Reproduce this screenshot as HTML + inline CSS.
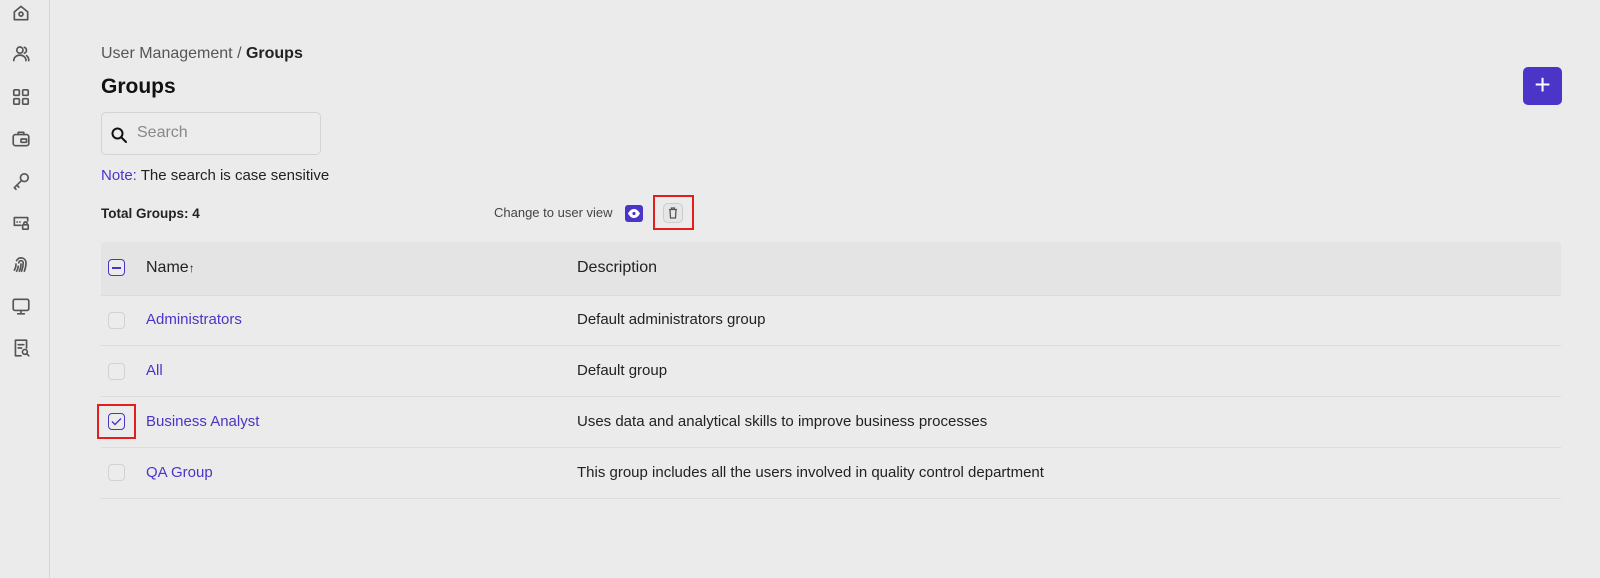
<!DOCTYPE html>
<html><head><meta charset="utf-8"><style>
*{margin:0;padding:0;box-sizing:border-box}
body{width:1600px;height:578px;background:#ebebeb;font-family:"Liberation Sans",sans-serif;position:relative;overflow:hidden;color:#222}
.a{position:absolute}
.side{left:0;top:0;width:50px;height:578px;border-right:1px solid #d4d4d4;background:#ebebeb}
.side svg{position:absolute;left:11px;width:20px;height:20px;fill:none;stroke:#555;stroke-width:1.5;stroke-linecap:round;stroke-linejoin:round}
.cb{width:17px;height:17px;border:1.5px solid #d2d2d2;border-radius:4px;background:#ececec}
.row{left:101px;width:1460px;height:51px;border-bottom:1px solid #dcdcdc}
.lk{color:#4a35c8;font-size:15px}
.ds{font-size:15px;color:#222}
</style></head><body>
<div class="a side">
<svg style="top:3px" viewBox="0 0 18 18"><path d="M3 8 L9 3 L15 8 V15 H3 Z"/><circle cx="9" cy="10" r="1.8"/></svg>
<svg style="top:44px" viewBox="0 0 18 18"><circle cx="8" cy="5.5" r="2.8"/><path d="M2.5 15c0-3 2.5-5 5.5-5s5.5 2 5.5 5"/><path d="M12 3a2.8 2.8 0 0 1 0 5.3M14 10.5c1.3.8 2 2.5 2 4.5"/></svg>
<svg style="top:87px" viewBox="0 0 18 18"><rect x="2.5" y="2.5" width="5" height="5" rx="1"/><rect x="10.5" y="2.5" width="5" height="5" rx="1"/><rect x="2.5" y="10.5" width="5" height="5" rx="1"/><rect x="10.5" y="10.5" width="5" height="5" rx="1"/></svg>
<svg style="top:129px" viewBox="0 0 18 18"><rect x="2" y="5" width="14" height="10" rx="2"/><path d="M6.5 5V3h5v2"/><rect x="9" y="9" width="5" height="3" rx="0.5"/></svg>
<svg style="top:171px" viewBox="0 0 18 18"><circle cx="12" cy="6" r="3.5"/><path d="M9.5 8.5 L3 15 L4.5 16.5 M5.5 13 L7 14.5"/></svg>
<svg style="top:212px" viewBox="0 0 18 18"><path d="M9 12H3V5h12v3"/><path d="M5.5 9h.1M8 9h.1"/><rect x="10.5" y="11.5" width="5" height="4" rx="0.5"/><path d="M11.5 11.5v-1a1.5 1.5 0 0 1 3 0v1"/></svg>
<svg style="top:254px" viewBox="0 0 18 18"><path d="M5 6a4.5 4.5 0 0 1 8.5 1.5c0 3-.5 5.5-1.5 8M4.5 9c0 2.5-.5 4-1.5 5.5M7 8a2 2 0 0 1 4 0c0 3-.5 5-1.5 7.5M9 9c0 2.5-.5 4.5-1.5 6.5M6.5 11c0 1.5-.5 3-1.5 4.5"/></svg>
<svg style="top:296px" viewBox="0 0 18 18"><rect x="2" y="3" width="14" height="10" rx="1.5"/><path d="M9 13v3M6 16h6"/></svg>
<svg style="top:338px" viewBox="0 0 18 18"><path d="M9 16H4V2h10v7"/><path d="M6.5 6h5M6.5 9h3"/><circle cx="12.5" cy="12.5" r="2.2"/><path d="M14 14l2 2"/></svg>
</div>

<div class="a" style="left:101px;top:45px;font-size:16px;color:#555">User Management / <b style="color:#222">Groups</b></div>
<div class="a" style="left:101px;top:75px;font-size:21px;font-weight:bold;color:#111">Groups</div>
<div class="a" style="left:1523px;top:67px;width:39px;height:38px;background:#4a35c8;border-radius:5px;color:#fff;font-size:28px;line-height:36px;text-align:center;font-weight:300">+</div>

<div class="a" style="left:101px;top:112px;width:220px;height:43px;border:1px solid #d4d4d4;border-radius:5px;background:#ececec"></div>
<svg class="a" style="left:110px;top:126px" width="18" height="18" viewBox="0 0 18 18" fill="none" stroke="#111" stroke-width="2" stroke-linecap="round"><circle cx="7.5" cy="7.5" r="5"/><path d="M11.5 11.5L16 16"/></svg>
<div class="a" style="left:137px;top:124px;font-size:16px;color:#888">Search</div>
<div class="a" style="left:101px;top:167px;font-size:15px;color:#222"><span style="color:#4a35c8">Note:</span> The search is case sensitive</div>

<div class="a" style="left:101px;top:206px;font-size:13.5px;font-weight:bold;color:#222">Total Groups: 4</div>
<div class="a" style="left:494px;top:205px;font-size:13px;color:#444">Change to user view</div>
<div class="a" style="left:625px;top:205px;width:18px;height:17px;background:#4a35c8;border-radius:3px"></div>
<svg class="a" style="left:627px;top:207px" width="14" height="13" viewBox="0 0 14 13"><path d="M1 6.5C3 3 5 2 7 2s4 1 6 4.5C11 10 9 11 7 11S3 10 1 6.5z" fill="#fff"/><circle cx="7" cy="6.5" r="1.6" fill="#4a35c8"/></svg>
<div class="a" style="left:663px;top:203px;width:20px;height:20px;border:1px solid #ccc;border-radius:5px;background:#e6e6e6"></div>
<svg class="a" style="left:668px;top:207px" width="10" height="12" viewBox="0 0 10 12" fill="none" stroke="#555" stroke-width="1.3"><path d="M1 2.5h8M3.5 2.5V1h3v1.5M2 2.5l.5 8.5h5l.5-8.5"/></svg>
<div class="a" style="left:653px;top:195px;width:41px;height:35px;border:2px solid #e31e1e"></div>

<div class="a" style="left:101px;top:242px;width:1460px;height:54px;background:#e4e4e4;border-radius:4px 4px 0 0;border-bottom:1px solid #dcdcdc"></div>
<div class="a cb" style="left:108px;top:259px;border-color:#4a35c8;background:#ececec"></div>
<div class="a" style="left:112px;top:267px;width:9px;height:1.5px;background:#4a35c8"></div>
<div class="a" style="left:146px;top:259px;font-size:16px;color:#222">Name<span style="font-size:12px">↑</span></div>
<div class="a" style="left:577px;top:259px;font-size:16px;color:#222">Description</div>

<div class="a row" style="top:295px"></div>
<div class="a cb" style="left:108px;top:312px"></div>
<div class="a lk" style="left:146px;top:311px">Administrators</div>
<div class="a ds" style="left:577px;top:311px">Default administrators group</div>

<div class="a row" style="top:346px"></div>
<div class="a cb" style="left:108px;top:363px"></div>
<div class="a lk" style="left:146px;top:362px">All</div>
<div class="a ds" style="left:577px;top:362px">Default group</div>

<div class="a row" style="top:397px"></div>
<div class="a cb" style="left:108px;top:413px;border-color:#4a35c8"></div>
<svg class="a" style="left:111px;top:417px" width="11" height="9" viewBox="0 0 11 9" fill="none" stroke="#4a35c8" stroke-width="1.4"><path d="M1 4.5L4 7.5L10 1.5"/></svg>
<div class="a" style="left:97px;top:404px;width:39px;height:35px;border:2px solid #e31e1e"></div>
<div class="a lk" style="left:146px;top:413px">Business Analyst</div>
<div class="a ds" style="left:577px;top:413px">Uses data and analytical skills to improve business processes</div>

<div class="a row" style="top:448px"></div>
<div class="a cb" style="left:108px;top:464px"></div>
<div class="a lk" style="left:146px;top:464px">QA Group</div>
<div class="a ds" style="left:577px;top:464px">This group includes all the users involved in quality control department</div>
</body></html>
